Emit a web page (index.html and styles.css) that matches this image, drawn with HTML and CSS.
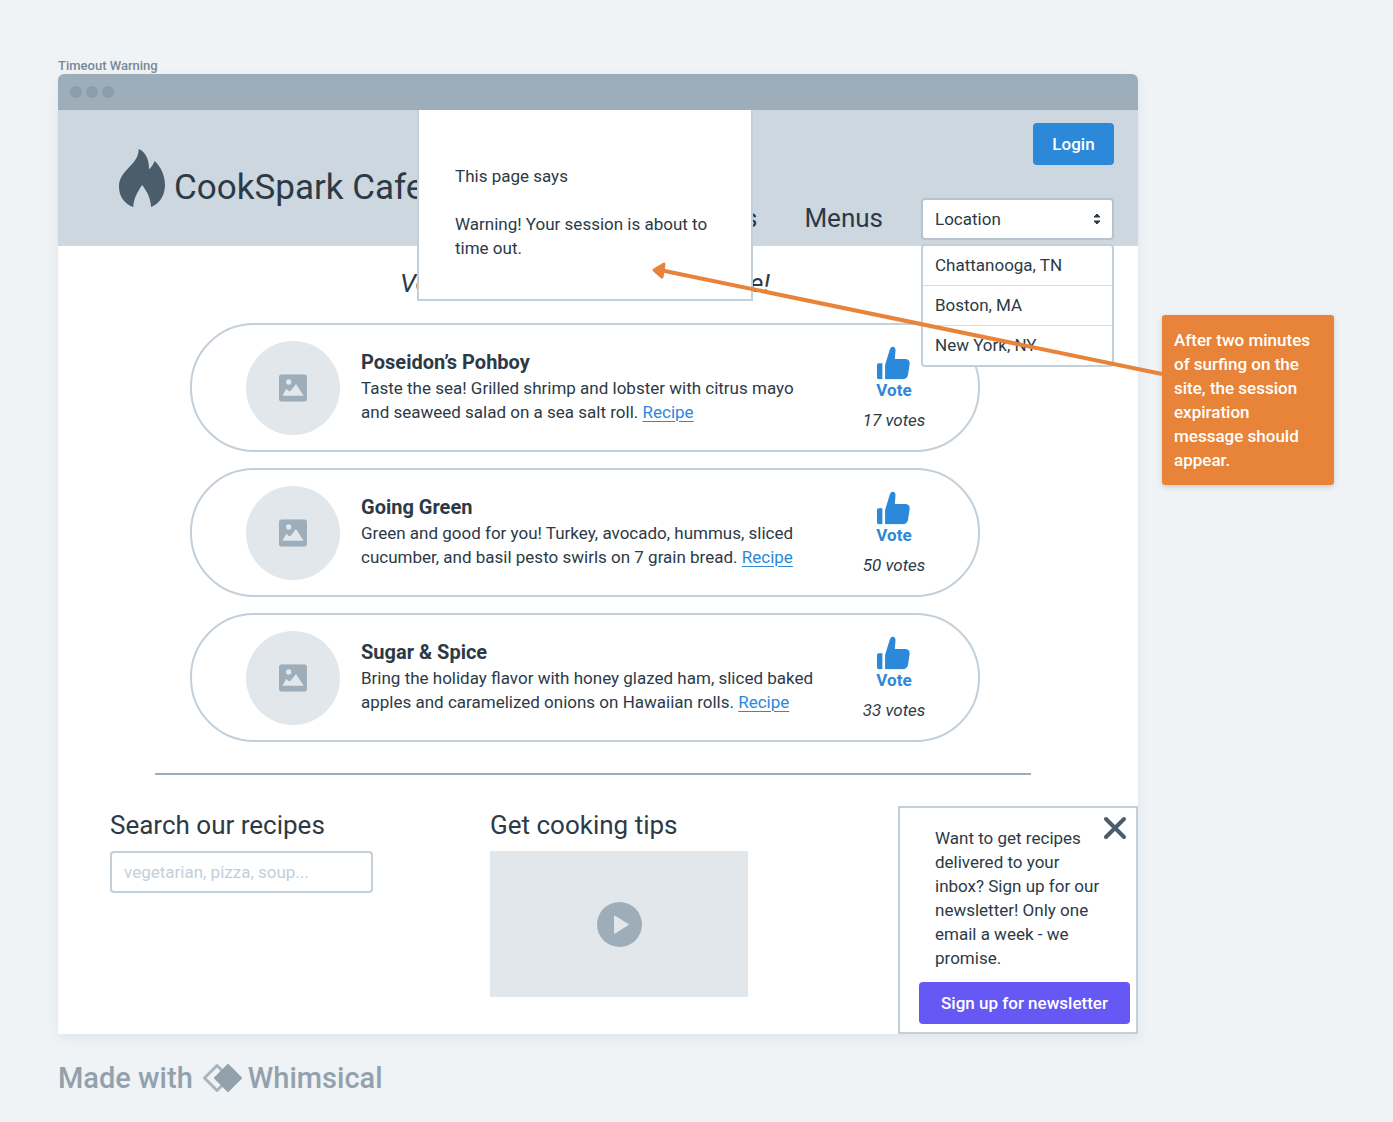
FILE: index.html
```html
<!DOCTYPE html>
<html lang="en">
<head>
<meta charset="utf-8">
<meta name="viewport" content="width=device-width, initial-scale=1">
<title>Timeout Warning</title>
<link rel="stylesheet" href="styles.css">
</head>
<body>
<svg class="sprite" aria-hidden="true">
  <symbol id="icon-image" viewBox="0 0 84 82">
    <rect width="84" height="82" rx="9" fill="#9dadb9"/>
    <circle cx="29" cy="23" r="8" fill="#e2e7eb"/>
    <path d="M10 64 22 43 30 51 35 49 51 29 74 64Z" fill="#e2e7eb"/>
  </symbol>
  <symbol id="icon-thumb" viewBox="0 0 98 98">
    <path d="M5 50H16V97H5Q0 97 0 92V55Q0 50 5 50ZM24 97V55L38 9Q41 0 47 0Q55 2 55 11L53 37H85Q98 38 97 52L92 85Q89 97 78 97Z" fill="#2c88d9"/>
  </symbol>
</svg>

<main class="canvas">
  <section class="board">
    <h1 class="board-label">Timeout Warning</h1>
    <div class="window">
      <div class="titlebar"><span class="dot"></span><span class="dot"></span><span class="dot"></span></div>

      <div class="site">
        <header class="site-header">
          <a class="brand" href="#">
            <svg class="flame" viewBox="0 0 138 174" aria-hidden="true"><path d="M59 0C80 9 91 32 90 61C98 54 103 45 107 36C126 54 138 80 138 108C138 142 119 166 96 174C96 151 84 126 69 108C58 126 43 148 43 174C17 164 0 143 0 113C0 62 60 48 59 0Z" fill="#4b5c6b"/></svg>
            <span>CookSpark Cafe</span>
          </a>
          <div class="header-side">
            <button class="button login" type="button">Login</button>
            <nav class="nav">
              <a href="#">Recipes</a>
              <a href="#">Menus</a>
              <div class="location">
                <select aria-label="Location"><option>Location</option></select>
                <svg class="carets" viewBox="0 0 8 12" aria-hidden="true"><path d="M4 1 7 4H1ZM1 8H7L4 11Z" fill="#2c3a47" stroke="#2c3a47" stroke-linejoin="round"/></svg>
                <ul class="location-list">
                  <li>Chattanooga, TN</li>
                  <li>Boston, MA</li>
                  <li>New York, NY</li>
                </ul>
              </div>
            </nav>
          </div>
        </header>

        <section class="votes">
          <h2 class="votes-title">Vote for your favorite new recipe!</h2>
          <article class="card">
            <div class="photo"><svg viewBox="0 0 84 82" aria-hidden="true"><use href="#icon-image"/></svg></div>
            <div class="card-text">
              <h3>Poseidon’s Pohboy</h3>
              <p>Taste the sea! Grilled shrimp and lobster with citrus mayo and seaweed salad on a sea salt roll. <a href="#">Recipe</a></p>
            </div>
            <div class="card-vote">
              <button class="vote" type="button"><svg viewBox="0 0 98 98" aria-hidden="true"><use href="#icon-thumb"/></svg>Vote</button>
              <span class="count">17 votes</span>
            </div>
          </article>
          <article class="card">
            <div class="photo"><svg viewBox="0 0 84 82" aria-hidden="true"><use href="#icon-image"/></svg></div>
            <div class="card-text">
              <h3>Going Green</h3>
              <p>Green and good for you! Turkey, avocado, hummus, sliced cucumber, and basil pesto swirls on 7 grain bread. <a href="#">Recipe</a></p>
            </div>
            <div class="card-vote">
              <button class="vote" type="button"><svg viewBox="0 0 98 98" aria-hidden="true"><use href="#icon-thumb"/></svg>Vote</button>
              <span class="count">50 votes</span>
            </div>
          </article>
          <article class="card">
            <div class="photo"><svg viewBox="0 0 84 82" aria-hidden="true"><use href="#icon-image"/></svg></div>
            <div class="card-text">
              <h3>Sugar &amp; Spice</h3>
              <p>Bring the holiday flavor with honey glazed ham, sliced baked apples and caramelized onions on Hawaiian rolls. <a href="#">Recipe</a></p>
            </div>
            <div class="card-vote">
              <button class="vote" type="button"><svg viewBox="0 0 98 98" aria-hidden="true"><use href="#icon-thumb"/></svg>Vote</button>
              <span class="count">33 votes</span>
            </div>
          </article>
        </section>

        <hr class="divider">

        <div class="extras">
          <form class="search">
            <label for="search">Search our recipes</label>
            <input id="search" type="text" placeholder="vegetarian, pizza, soup...">
          </form>
          <section class="tips">
            <h2>Get cooking tips</h2>
            <button class="video" type="button" aria-label="Play video">
              <svg viewBox="0 0 136 136" aria-hidden="true"><circle cx="68" cy="68" r="68" fill="#9dadb9"/><path d="M53 42V95L95 68Z" fill="#e2e7eb" stroke="#e2e7eb" stroke-width="3" stroke-linejoin="round"/></svg>
            </button>
          </section>
          <aside class="newsletter">
            <p>Want to get recipes delivered to your inbox? Sign up for our newsletter! Only one email a week - we promise.</p>
            <button class="button signup" type="button">Sign up for newsletter</button>
            <button class="close" type="button" aria-label="Close"><svg viewBox="0 0 24 24" aria-hidden="true"><path d="M3 3 21 21M21 3 3 21" stroke="#4b5c6b" stroke-width="4" stroke-linecap="round"/></svg></button>
          </aside>
        </div>

        <div class="dialog" role="alertdialog" aria-label="Session warning">
          <p>This page says</p>
          <p>Warning! Your session is about to time out.</p>
        </div>
      </div>
    </div>
  </section>

  <aside class="note">
    After two minutes of surfing on the site, the session expiration message should appear.
    <svg class="arrow" viewBox="0 0 510 114" aria-hidden="true"><path d="M510 109 8 5" stroke="#e8833a" stroke-width="4"/><path d="M2 5 12 -1 10 12Z" fill="#e8833a" stroke="#e8833a" stroke-width="3" stroke-linejoin="round"/></svg>
  </aside>
</main>

<footer class="credit">
  Made with
  <a href="#"><svg viewBox="0 0 40 30" aria-hidden="true"><path d="M15 2.500 2.500 15 15 27.500 27.500 15Z" fill="none" stroke="#a9b5be" stroke-width="3" stroke-linejoin="round"/><path d="M26 2 13 15 26 28 39 15Z" fill="#93a1ac" stroke="#93a1ac" stroke-width="2" stroke-linejoin="round"/></svg>Whimsical</a>
</footer>
</body>
</html>
```
FILE: styles.css
```css
* { box-sizing: border-box; }

body {
  margin: 0;
  padding: 58px 59px 24px 58px;
  background: #eff3f6;
  color: #2c3a47;
  font: 17px/24px Roboto, "Liberation Sans", sans-serif;
}

h1, h2, h3, p, ul { margin: 0; padding: 0; }
button, input, select { font: inherit; color: inherit; }
button { border: 0; cursor: pointer; }
a { color: inherit; text-decoration: none; }

.sprite { display: none; }

.canvas {
  display: grid;
  grid-template-columns: minmax(0, 1fr) 172px;
  gap: 24px;
  align-items: start;
}

.board-label {
  color: #788896;
  font-size: 13px;
  line-height: 16px;
  font-weight: 500;
}

.window {
  background: #fff;
  border-radius: 6px 6px 0 0;
  box-shadow: 0 4px 12px rgba(44, 58, 71, 0.07);
}

.titlebar {
  display: flex;
  align-items: center;
  gap: 4px;
  height: 36px;
  padding: 0 12px;
  background: #9dadb9;
  border-radius: 6px 6px 0 0;
}

.dot {
  width: 12px;
  height: 12px;
  border-radius: 50%;
  background: #8c9cab;
}

.site { position: relative; }

.site-header {
  display: flex;
  justify-content: space-between;
  height: 136px;
  padding: 0 24px 0 61px;
  background: #cdd7e0;
}

.brand {
  display: flex;
  align-items: center;
  gap: 9px;
  font-size: 35px;
  line-height: 40px;
  white-space: nowrap;
}

.brand span { padding-top: 20px; }

.flame {
  width: 46px;
  height: 58px;
}

.header-side {
  display: flex;
  flex-direction: column;
  align-items: flex-end;
  justify-content: space-between;
  padding: 13px 0 6px;
}

.button {
  height: 42px;
  border-radius: 4px;
  color: #fff;
  font-weight: 500;
}

.login { width: 81px; background: #2c88d9; }

.nav {
  display: flex;
  align-items: center;
  gap: 38px;
}

.nav > a {
  font-size: 26px;
  line-height: 32px;
  padding-bottom: 2px;
}

.nav > a:first-child { margin-right: 9px; }

.location { position: relative; width: 193px; }

.location select {
  display: block;
  width: 100%;
  height: 42px;
  padding: 0 12px;
  appearance: none;
  background: #fff;
  border: 2px solid #b7c4cf;
  border-radius: 4px;
}

.carets {
  position: absolute;
  top: 15px;
  right: 13px;
  width: 8px;
  height: 12px;
  pointer-events: none;
}

.location-list {
  position: absolute;
  top: 46px;
  left: 0;
  width: 100%;
  background: #fff;
  border: 2px solid #c3cfd9;
  border-radius: 4px;
  list-style: none;
}

.location-list li { padding: 7px 12px 8px; }
.location-list li + li { border-top: 1px solid #d5dde5; }

.votes {
  display: flex;
  flex-direction: column;
  gap: 16px;
  padding: 21px 158px 0 132px;
}

.votes-title {
  margin-bottom: 8px;
  font-size: 26px;
  line-height: 32px;
  font-weight: 400;
  font-style: italic;
  text-align: center;
}

.card {
  display: flex;
  align-items: center;
  min-height: 129px;
  padding: 0 40px 0 54px;
  border: 2px solid #c3cfd9;
  border-radius: 64px;
}

.photo {
  display: flex;
  flex: none;
  align-items: center;
  justify-content: center;
  width: 94px;
  height: 94px;
  margin-right: 21px;
  border-radius: 50%;
  background: #e2e7eb;
}

.photo svg { width: 28px; height: 28px; }

.card-text { flex: 1; padding: 0 28px 4px 0; }

.card-text h3 {
  font-size: 20px;
  line-height: 28px;
  font-weight: 700;
}

.card-text a {
  color: #2c88d9;
  text-decoration: underline 1px;
  text-underline-offset: 3px;
}

.card-vote {
  display: flex;
  flex: none;
  flex-direction: column;
  align-items: center;
  gap: 8px;
  width: 88px;
  padding-top: 2px;
}

.vote {
  display: flex;
  flex-direction: column;
  align-items: center;
  padding: 0;
  background: none;
  color: #2c88d9;
  font-weight: 700;
  line-height: 20px;
}

.vote svg { width: 33px; height: 34px; }

.count { font-style: italic; }

.divider {
  height: 2px;
  margin: 31px 107px 31px 97px;
  border: 0;
  background: #9dadb9;
}

.extras {
  display: grid;
  grid-template-columns: 380px minmax(0, 1fr) 240px;
  padding-left: 52px;
}

.search, .tips { padding-top: 3px; }

.search label, .tips h2 {
  display: block;
  margin-bottom: 10px;
  font-size: 26px;
  line-height: 32px;
  font-weight: 400;
}

.search input {
  width: 263px;
  height: 42px;
  padding: 0 12px;
  border: 2px solid #c3cfd9;
  border-radius: 4px;
}

.search input::placeholder { color: #c3cfd9; opacity: 1; }

.video {
  display: flex;
  align-items: center;
  justify-content: center;
  width: 258px;
  height: 146px;
  background: #e2e7eb;
}

.video svg { width: 45px; height: 45px; }

.newsletter {
  position: relative;
  padding: 18px 6px 8px 19px;
  border: 2px solid #c3cfd9;
}

.newsletter p { padding: 0 20px 0 16px; }

.signup {
  width: 100%;
  margin-top: 12px;
  padding: 0;
  background: #6558f5;
}

.close {
  position: absolute;
  top: 8px;
  right: 9px;
  padding: 0;
  background: none;
}

.close svg { display: block; width: 24px; height: 24px; }

.dialog {
  position: absolute;
  top: 0;
  left: 359px;
  width: 336px;
  height: 191px;
  padding: 54px 36px 0;
  background: #fff;
  border: 2px solid #c3cfd9;
  border-top: 0;
}

.dialog p + p { margin-top: 24px; }

.note {
  position: relative;
  margin-top: 257px;
  padding: 13px 12px;
  border-radius: 3px;
  background: #e8833a;
  box-shadow: 0 2px 5px rgba(44, 58, 71, 0.2);
  color: #fff;
  font-weight: 500;
}

.arrow {
  position: absolute;
  top: -50px;
  right: 100%;
  width: 510px;
  height: 114px;
  overflow: visible;
}

.credit {
  display: flex;
  align-items: center;
  gap: 9px;
  margin-top: 28px;
  color: #93a1ac;
  font-size: 29px;
  line-height: 32px;
  font-weight: 500;
}

.credit a {
  display: flex;
  align-items: center;
  gap: 6px;
}

.credit svg { width: 40px; height: 30px; }
```
